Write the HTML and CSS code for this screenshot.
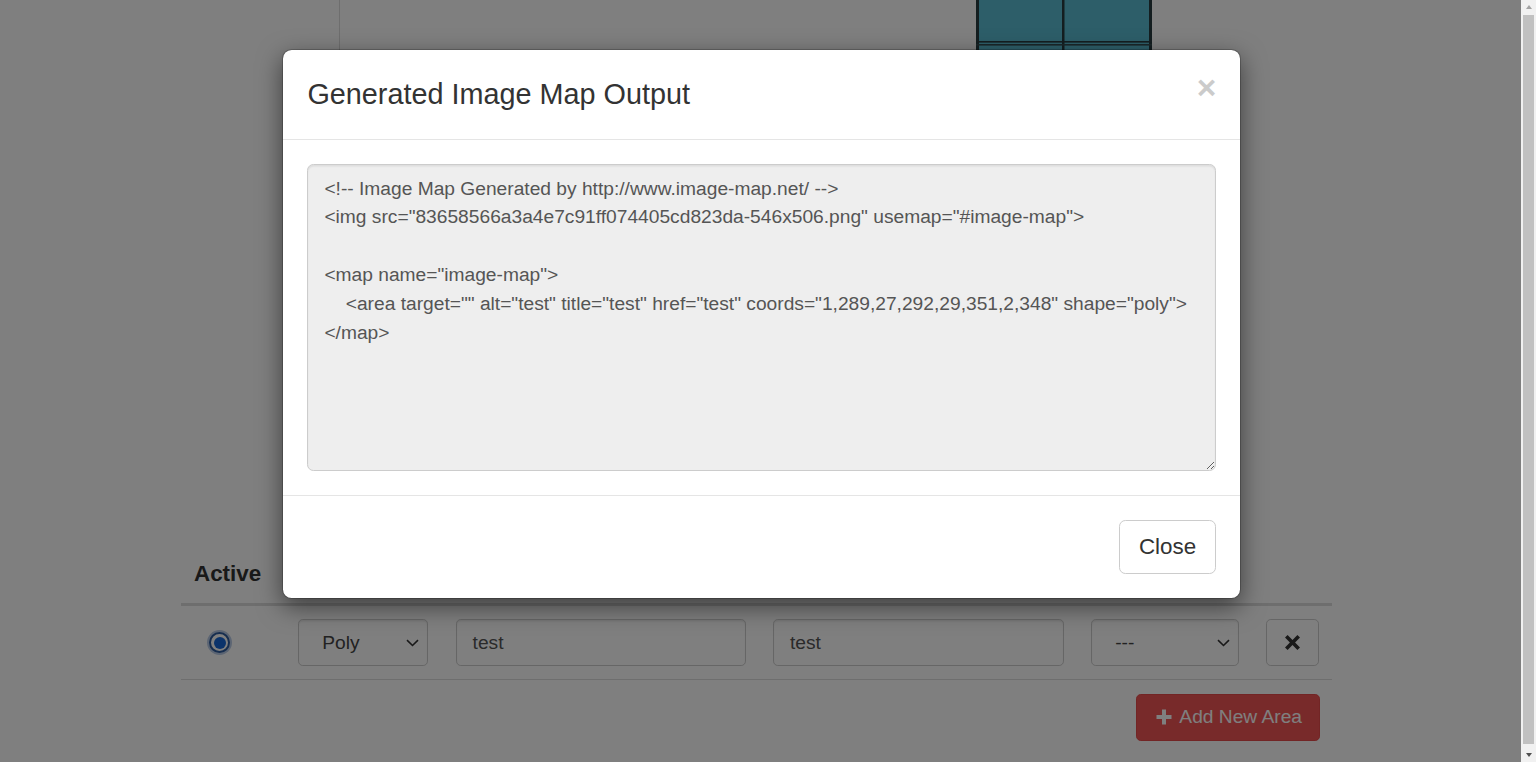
FILE: index.html
```html
<!DOCTYPE html>
<html lang="en">
<head>
<meta charset="utf-8">
<title>Image Map Generator</title>
<link rel="stylesheet" href="styles.css">
</head>
<body>
<div class="screen">
  <main class="page">
    <section class="editor">
      <div class="canvas-frame">
        <svg class="map-image" width="176" height="300" viewBox="0 0 176 300" aria-hidden="true">
          <rect x="0" y="0" width="176" height="300" fill="#5abcd2"/>
          <rect x="0" y="0" width="3" height="300" fill="#283c40"/>
          <rect x="173" y="0" width="3" height="300" fill="#283c40"/>
          <rect x="86" y="0" width="2.5" height="300" fill="#283c40"/>
          <rect x="0" y="41" width="176" height="1.6" fill="#283c40"/>
          <rect x="0" y="44" width="176" height="1.6" fill="#344d52"/>
        </svg>
      </div>
    </section>

    <section class="areas">
      <div class="areas-head"><div class="th">Active</div></div>
      <div class="area-row">
        <div class="cell-radio"><span class="radio"><span class="radio-dot"></span></span></div>
        <div class="select shape">
          <span>Poly</span>
          <svg class="chev" width="13" height="8" viewBox="0 0 13 8"><path d="M1 1.2 L6.5 6.5 L12 1.2" fill="none" stroke="#333" stroke-width="1.6"/></svg>
        </div>
        <div class="form-control">test</div>
        <div class="form-control">test</div>
        <div class="select target">
          <span>---</span>
          <svg class="chev" width="13" height="8" viewBox="0 0 13 8"><path d="M1 1.2 L6.5 6.5 L12 1.2" fill="none" stroke="#333" stroke-width="1.6"/></svg>
        </div>
        <button class="btn-remove" type="button" aria-label="Remove">
          <svg width="17" height="17" viewBox="0 0 17 17"><path d="M1 3.6 L3.6 1 L8.5 5.9 L13.4 1 L16 3.6 L11.1 8.5 L16 13.4 L13.4 16 L8.5 11.1 L3.6 16 L1 13.4 L5.9 8.5 Z" fill="#333"/></svg>
        </button>
      </div>
      <div class="actions">
        <button class="btn-danger" type="button">
          <svg width="16" height="16" viewBox="0 0 16 16"><path d="M6 0.5 H10 V6 H15.5 V10 H10 V15.5 H6 V10 H0.5 V6 H6 Z" fill="#fff"/></svg>
          <span>Add New Area</span>
        </button>
      </div>
    </section>

    <div class="backdrop"></div>

    <div class="modal-wrap">
      <div class="modal-content">
        <div class="modal-header">
          <button class="close" type="button" aria-label="Close">&times;</button>
          <h4 class="modal-title">Generated Image Map Output</h4>
        </div>
        <div class="modal-body">
          <textarea class="output" readonly wrap="off">&lt;!-- Image Map Generated by http://www.image-map.net/ --&gt;
&lt;img src="83658566a3a4e7c91ff074405cd823da-546x506.png" usemap="#image-map"&gt;

&lt;map name="image-map"&gt;
    &lt;area target="" alt="test" title="test" href="test" coords="1,289,27,292,29,351,2,348" shape="poly"&gt;
&lt;/map&gt;</textarea>
        </div>
        <div class="modal-footer">
          <button class="btn-default" type="button">Close</button>
        </div>
      </div>
    </div>
  </main>

  <div class="scrollbar">
    <span class="sb-arrow up"></span>
    <span class="sb-thumb"></span>
    <span class="sb-arrow down"></span>
  </div>
</div>
</body>
</html>
```

FILE: styles.css
```css
html, body {
  margin: 0;
  padding: 0;
  height: 762px;
  overflow: hidden;
}

body {
  font-family: "Liberation Sans", Arial, sans-serif;
  color: #333;
}

.screen {
  display: flex;
  height: 762px;
}

.page {
  flex: 1;
  position: relative;
  overflow: hidden;
  background: #fff;
  padding: 0 189px 0 181px;
}

/* background editor area */
.editor {
  padding-left: 158px;
  margin-bottom: 25px;
}

.canvas-frame {
  width: 880px;
  height: 520px;
  border-left: 1.6px solid #dcdcdc;
  border-right: 1.6px solid #dcdcdc;
  padding-left: 636px;
  box-sizing: content-box;
}

.map-image {
  display: block;
}

/* areas table */
.areas {
  width: 1151px;
}

.areas-head {
  border-bottom: 3.2px solid #ddd;
}

.th {
  padding: 12.8px 13px;
  font-size: 22.4px;
  line-height: 32px;
  font-weight: bold;
  color: #333;
}

.area-row {
  display: grid;
  grid-template-columns: 90px 130px 290px 291px 148px 53px;
  column-gap: 27.3px;
  align-items: center;
  padding: 13.4px 0 12.8px;
  border-bottom: 1.6px solid #ddd;
}

.cell-radio {
  padding-left: 28px;
  display: flex;
  align-items: center;
}

.radio {
  width: 21px;
  height: 21px;
  box-sizing: border-box;
  border-radius: 50%;
  border: 2.2px solid #2f5c9e;
  box-shadow: 0 0 0 2px #b9cbe6;
  background: #fff;
  display: flex;
  align-items: center;
  justify-content: center;
}

.radio-dot {
  width: 12px;
  height: 12px;
  border-radius: 50%;
  background: #1667d6;
}

.form-control,
.select {
  height: 47.4px;
  box-sizing: border-box;
  border: 1.6px solid #ccc;
  border-radius: 4.8px;
  background: #fff;
  box-shadow: inset 0 1.6px 1.6px rgba(0, 0, 0, 0.075);
  font-size: 19.2px;
  color: #555;
  display: flex;
  align-items: center;
}

.form-control {
  padding: 0 16px;
}

.select {
  padding: 0 8px 0 23px;
  justify-content: space-between;
  color: #444;
}

.chev {
  display: block;
}

.btn-remove {
  height: 47.4px;
  width: 53px;
  box-sizing: border-box;
  border: 1.6px solid #ccc;
  border-radius: 4.8px;
  background: #fff;
  padding: 0;
  display: flex;
  align-items: center;
  justify-content: center;
}

.btn-remove svg {
  display: block;
}

.actions {
  display: flex;
  justify-content: flex-end;
  padding: 13.4px 12px 0 0;
}

.btn-danger {
  height: 47.4px;
  box-sizing: border-box;
  padding: 0 17px 0 19px;
  border: 1.6px solid #e54a4a;
  border-radius: 4.8px;
  background: #f05555;
  color: #fff;
  font-family: "Liberation Sans", Arial, sans-serif;
  font-size: 19.2px;
  display: flex;
  align-items: center;
  gap: 7px;
}

.btn-danger svg {
  display: block;
}

/* modal */
.backdrop {
  position: absolute;
  inset: 0;
  background: rgba(0, 0, 0, 0.5);
}

.modal-wrap {
  position: absolute;
  inset: 0;
  padding-top: 49px;
}

.modal-content {
  width: 957px;
  margin: 0 0 0 282.4px;
  background: #fff;
  background-clip: padding-box;
  border: 1.6px solid rgba(0, 0, 0, 0.2);
  border-radius: 9.6px;
  box-shadow: 0 8px 24px rgba(0, 0, 0, 0.5);
}

.modal-header {
  padding: 24px;
  border-bottom: 1.6px solid #e5e5e5;
}

.modal-title {
  margin: 0;
  font-size: 28.8px;
  line-height: 41.1px;
  font-weight: normal;
  color: #333;
}

.close {
  float: right;
  margin-top: -3px;
  padding: 0;
  border: 0;
  background: transparent;
  font-family: "Liberation Sans", Arial, sans-serif;
  font-size: 33.6px;
  font-weight: bold;
  line-height: 1;
  color: #000;
  opacity: 0.2;
  text-shadow: 0 1.6px 0 #fff;
}

.modal-body {
  padding: 24px;
}

.output {
  display: block;
  width: 100%;
  height: 307px;
  box-sizing: border-box;
  margin: 0;
  padding: 9.6px 16px;
  border: 1.6px solid #ccc;
  border-radius: 6.4px;
  background: #eee;
  box-shadow: inset 0 1.6px 1.6px rgba(0, 0, 0, 0.075);
  font-family: "Liberation Sans", Arial, sans-serif;
  font-size: 19.2px;
  line-height: 28.8px;
  color: #555;
  white-space: pre;
  overflow: hidden;
  resize: vertical;
  outline: none;
}

.modal-footer {
  padding: 24px;
  border-top: 1.6px solid #e5e5e5;
  display: flex;
  justify-content: flex-end;
}

.btn-default {
  height: 54.4px;
  box-sizing: border-box;
  padding: 0 19.2px;
  border: 1.6px solid #ccc;
  border-radius: 6.4px;
  background: #fff;
  color: #333;
  font-family: "Liberation Sans", Arial, sans-serif;
  font-size: 22.4px;
  line-height: 32px;
}

/* browser scrollbar */
.scrollbar {
  width: 15px;
  flex: none;
  background: #f1f1f1;
  display: flex;
  flex-direction: column;
  align-items: center;
}

.sb-arrow {
  height: 14px;
  width: 15px;
  flex: none;
  display: flex;
  align-items: center;
  justify-content: center;
}

.sb-arrow::before {
  content: "";
  width: 0;
  height: 0;
  border-left: 3.5px solid transparent;
  border-right: 3.5px solid transparent;
}

.sb-arrow.up::before {
  border-bottom: 4px solid #a3a3a3;
}

.sb-arrow.down::before {
  border-top: 4px solid #505050;
}

.sb-thumb {
  flex: 1;
  width: 11px;
  margin: 1px 0 4px;
  background: #c1c1c1;
}
```
